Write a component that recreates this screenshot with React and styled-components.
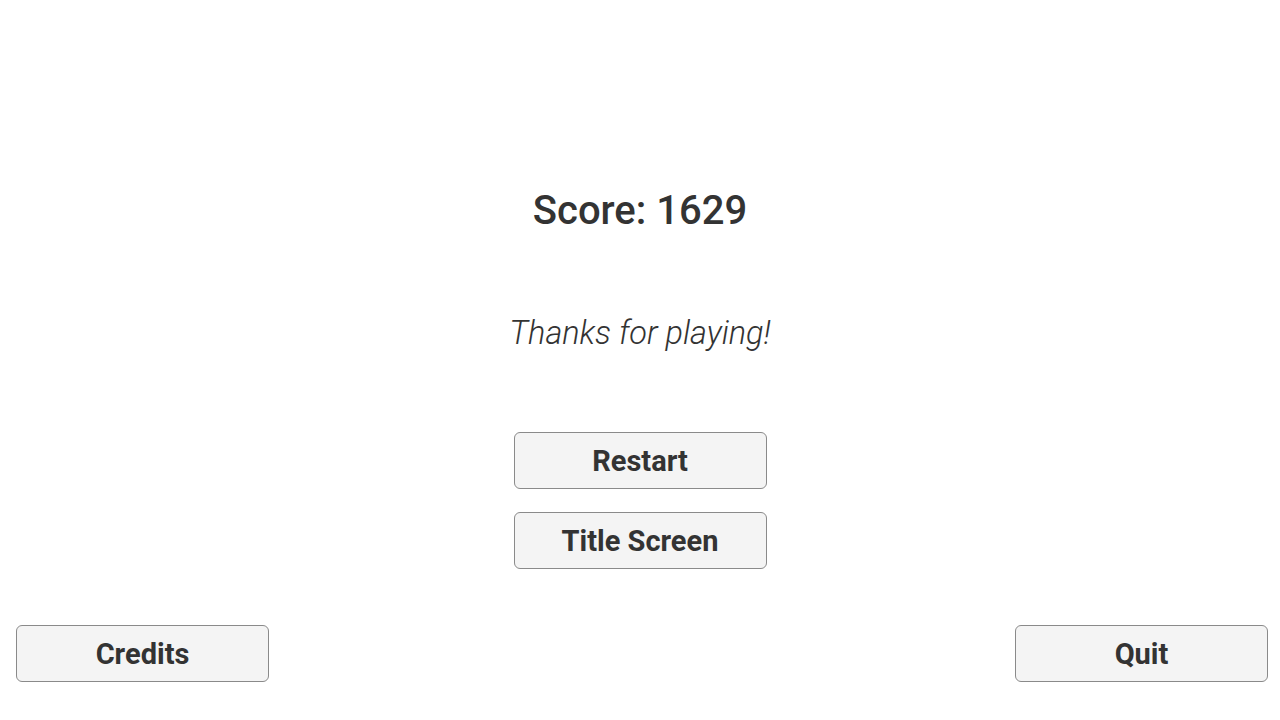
import React from "react";
import styled, { createGlobalStyle } from "styled-components";

const GlobalStyle = createGlobalStyle`
  html, body {
    margin: 0;
    padding: 0;
    background: #ffffff;
  }
  body {
    font-family: Roboto, "Liberation Sans", sans-serif;
    color: #333333;
  }
`;

const Screen = styled.div`
  width: 100%;
  min-height: 100vh;
  display: flex;
  flex-direction: column;
  box-sizing: border-box;
`;

const Center = styled.div`
  display: flex;
  flex-direction: column;
  align-items: center;
  padding-top: 188px;
`;

const Score = styled.h1`
  margin: 0;
  font-size: 40px;
  line-height: 46px;
  font-weight: 500;
  color: #333333;
`;

const Thanks = styled.p`
  margin: 79px 0 0;
  font-size: 32.5px;
  line-height: 40px;
  font-weight: 300;
  font-style: italic;
  color: #333333;
`;

const Menu = styled.div`
  display: flex;
  flex-direction: column;
  gap: 23px;
  margin-top: 79px;
`;

const Button = styled.button`
  width: 253px;
  height: 57px;
  box-sizing: border-box;
  border: 1px solid #8a8a8a;
  border-radius: 6px;
  background: #f4f4f4;
  color: #333333;
  font-family: Roboto, "Liberation Sans", sans-serif;
  font-size: 29px;
  font-weight: 700;
  padding: 0;
  cursor: pointer;
`;

const Footer = styled.div`
  margin-top: auto;
  display: flex;
  justify-content: space-between;
  padding: 0 12px 38px 16px;
`;

export default function App() {
  return (
    <>
      <GlobalStyle />
      <Screen>
        <Center>
          <Score>Score: 1629</Score>
          <Thanks>Thanks for playing!</Thanks>
          <Menu>
            <Button>Restart</Button>
            <Button>Title Screen</Button>
          </Menu>
        </Center>
        <Footer>
          <Button>Credits</Button>
          <Button>Quit</Button>
        </Footer>
      </Screen>
    </>
  );
}
